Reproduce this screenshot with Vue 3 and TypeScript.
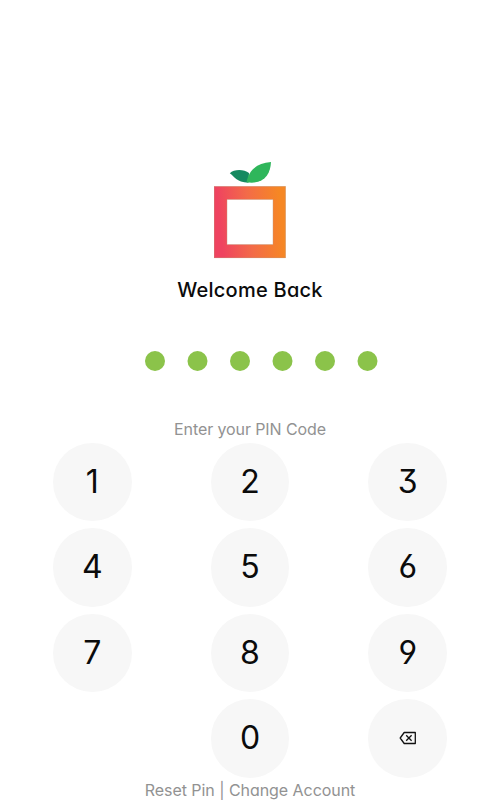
<script setup lang="ts">
import { ref } from 'vue'

const pinLength = 6
const pin = ref<string>('000000')
const keys: string[] = ['1', '2', '3', '4', '5', '6', '7', '8', '9', '', '0', 'back']

function press(key: string): void {
  if (key === 'back') {
    pin.value = pin.value.slice(0, -1)
  } else if (pin.value.length < pinLength) {
    pin.value += key
  }
}
</script>

<template>
  <main class="screen">
    <svg class="logo" width="72" height="98" viewBox="0 0 72 98" aria-hidden="true">
      <defs>
        <linearGradient id="frame" x1="0" y1="0.55" x2="1" y2="0.45">
          <stop offset="0.08" stop-color="#ef4360" />
          <stop offset="0.5" stop-color="#f36b48" />
          <stop offset="0.94" stop-color="#f68724" />
        </linearGradient>
      </defs>
      <path d="M15.8 12.2C20 8 30 8 35 12L34.5 21.8C22 20.8 20.5 15.5 15.8 12.2Z" fill="#158a60" />
      <path d="M57 1C56.5 13 50 24 32.5 21.2C34.5 10 42 2 57 1Z" fill="#2fb65b" />
      <path
        d="M0 25.2H71.7V97H0ZM13 38.5V83.5H59V38.5Z"
        fill="url(#frame)"
        fill-rule="evenodd"
      />
      <path d="M.3 25.5H71.4V96.7H.3ZM13 38.5H59V83.5H13Z" fill="none" stroke="#c49a80" stroke-opacity=".6" stroke-width=".7" />
    </svg>

    <h1 class="title">Welcome Back</h1>

    <svg class="dots" width="234" height="20" viewBox="0 0 234 20">
      <circle
        v-for="n in pinLength"
        :key="n"
        class="dot"
        :class="{ filled: n <= pin.length }"
        :cx="10 + (n - 1) * 42.5"
        cy="10"
        r="10"
      />
    </svg>

    <p class="hint">Enter your PIN Code</p>

    <div class="keypad">
      <template v-for="key in keys" :key="key">
        <span v-if="key === ''"></span>
        <button v-else class="key" type="button" @click="press(key)">
          <svg v-if="key === 'back'" width="18" height="14" viewBox="0 0 18 14">
            <path d="M5.2 1.5H16.3V12.5H5.2L1.2 7Z" fill="none" stroke="#111" stroke-width="1.3" stroke-linejoin="round" />
            <path d="M7.2 4.3L12.6 9.7M12.6 4.3L7.2 9.7" stroke="#111" stroke-width="1.3" />
          </svg>
          <template v-else>{{ key }}</template>
        </button>
      </template>
    </div>

    <p class="links"><span>Reset Pin</span> | <span>Change Account</span></p>
  </main>
</template>

<style>
body {
  background: #fff;
  overflow: hidden;
}
</style>

<style scoped>
.screen {
  box-sizing: border-box;
  width: 500px;
  height: 800px;
  padding-top: 161px;
  overflow: hidden;
  display: flex;
  flex-direction: column;
  align-items: center;
  background: #fff;
  font-family: Inter, 'Liberation Sans', sans-serif;
  font-feature-settings: 'cv11', 'cv09', 'cv03', 'cv04';
}
.logo {
  flex: none;
}
.title {
  margin: 19px 0 0;
  font-size: 20px;
  line-height: 24px;
  font-weight: 500;
  letter-spacing: 0.25px;
  color: #0b0b0b;
  white-space: nowrap;
}
.dots {
  flex: none;
  margin: 49px 0 0 24px;
}
.dot {
  fill: #e5e5e5;
}
.dot.filled {
  fill: #8bc34a;
}
.hint,
.links {
  margin: 48px 0 0;
  font-size: 16px;
  line-height: 20px;
  letter-spacing: -0.1px;
  color: #929292;
  white-space: nowrap;
}
.keypad {
  display: grid;
  grid-template-columns: repeat(3, 78.6px);
  grid-auto-rows: 78.6px;
  gap: 6.9px 79.2px;
  margin-top: 3.7px;
}
.key {
  display: flex;
  align-items: center;
  justify-content: center;
  padding: 0;
  border: 0;
  border-radius: 50%;
  background: #f7f7f7;
  color: #0b0b0b;
  font: inherit;
  font-size: 32px;
  line-height: 40px;
}
.links {
  margin-top: 2.2px;
  letter-spacing: -0.05px;
}
</style>
